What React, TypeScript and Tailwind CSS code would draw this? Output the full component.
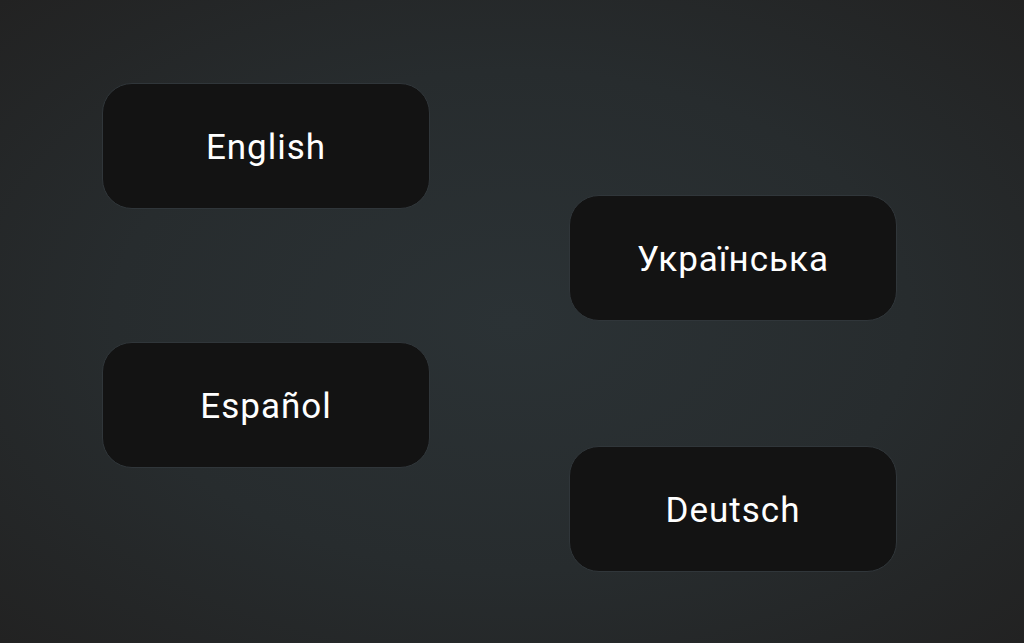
import React from "react";

function LangButton({ label }: { label: string }) {
  return (
    <button className="flex h-[126px] w-[328px] items-center justify-center rounded-[30px] border border-[#30363a] bg-[#131313] pt-[4px] text-[35px] text-white tracking-[1px] [font-family:Roboto,'Noto_Sans',sans-serif]">
      {label}
    </button>
  );
}

export default function App() {
  return (
    <div className="h-[643px] w-[1024px] overflow-hidden bg-[radial-gradient(ellipse_at_center,#2b3235_0%,#272c2e_55%,#222222_100%)]">
      <div className="flex gap-[139px] pl-[102px]">
        <div className="flex flex-col gap-[133px] pt-[83px]">
          <LangButton label="English" />
          <LangButton label="Español" />
        </div>
        <div className="flex flex-col gap-[125px] pt-[195px]">
          <LangButton label="Українська" />
          <LangButton label="Deutsch" />
        </div>
      </div>
    </div>
  );
}
